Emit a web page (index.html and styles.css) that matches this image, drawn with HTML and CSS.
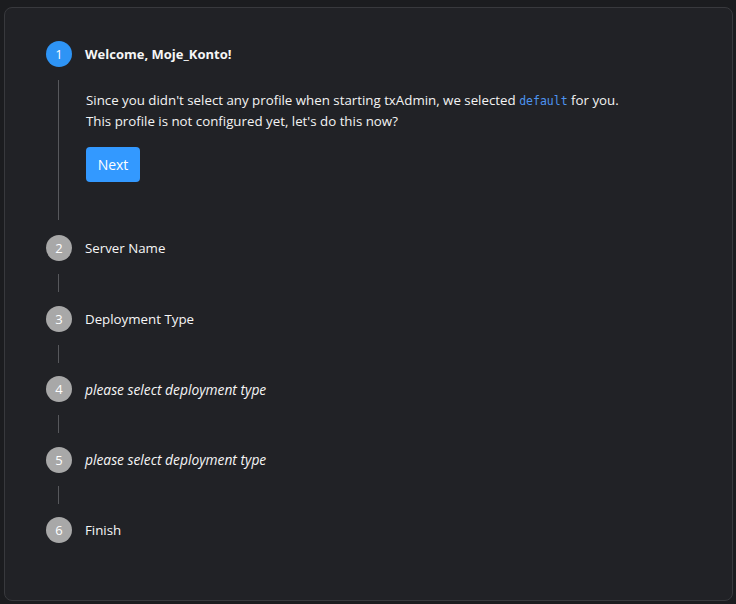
FILE: index.html
```html
<!DOCTYPE html>
<html>
<head>
<meta charset="utf-8">
<link rel="stylesheet" href="styles.css">
</head>
<body>
<div class="card">
  <div class="stepper">
    <div class="step">
      <div class="step-head">
        <span class="dot active">1</span>
        <span class="title bold">Welcome, Moje_Konto!</span>
      </div>
      <div class="connector big">
        <p class="desc">Since you didn't select any profile when starting txAdmin, we selected <code>default</code> for you.<br>This profile is not configured yet, let's do this now?</p>
        <button class="btn">Next</button>
      </div>
    </div>
    <div class="step">
      <div class="step-head">
        <span class="dot">2</span>
        <span class="title">Server Name</span>
      </div>
      <div class="connector"></div>
    </div>
    <div class="step">
      <div class="step-head">
        <span class="dot">3</span>
        <span class="title">Deployment Type</span>
      </div>
      <div class="connector"></div>
    </div>
    <div class="step">
      <div class="step-head">
        <span class="dot">4</span>
        <span class="title italic">please select deployment type</span>
      </div>
      <div class="connector"></div>
    </div>
    <div class="step">
      <div class="step-head">
        <span class="dot">5</span>
        <span class="title italic">please select deployment type</span>
      </div>
      <div class="connector"></div>
    </div>
    <div class="step">
      <div class="step-head">
        <span class="dot">6</span>
        <span class="title">Finish</span>
      </div>
    </div>
  </div>
</div>
</body>
</html>
```

FILE: styles.css
```css
* { box-sizing: border-box; }
html, body { height: 100%; }
body {
  margin: 0;
  padding: 7px 3px 3px 4px;
  background: #1b1c1f;
  font-family: "Open Sans", "Noto Sans", sans-serif;
  font-size: 13.3px;
  color: #f3f3f3;
}
.card {
  height: 594px;
  background: #212226;
  border: 1px solid #38393d;
  border-radius: 8px;
  padding: 33px 41px;
}
.step-head {
  display: flex;
  align-items: center;
  gap: 13px;
  height: 26px;
}
.dot {
  width: 26px;
  height: 26px;
  border-radius: 50%;
  background: #a8a8a8;
  color: #fff;
  display: flex;
  align-items: center;
  justify-content: center;
  font-size: 13px;
  flex: none;
}
.dot.active { background: #2e94f5; }
.title { color: #f6f6f6; }
.bold { font-weight: 700; font-size: 13px; }
.italic { font-style: italic; font-size: 13.8px; }
.connector {
  margin: 13px 0 13.5px 12px;
  border-left: 1px solid #57585c;
  height: 18px;
}
.connector.big {
  height: 140px;
  margin-bottom: 15px;
  padding: 10px 0 0 27px;
}
.desc {
  margin: 0;
  line-height: 20px;
}
code {
  font-family: "DejaVu Sans Mono", "Liberation Mono", monospace;
  font-size: 11.5px;
  color: #4d94f0;
}
.btn {
  margin-top: 16px;
  width: 54px;
  height: 35px;
  border: none;
  border-radius: 4px;
  background: #3399ff;
  color: #fff;
  font-family: inherit;
  font-size: 14px;
  padding: 0;
}
```
